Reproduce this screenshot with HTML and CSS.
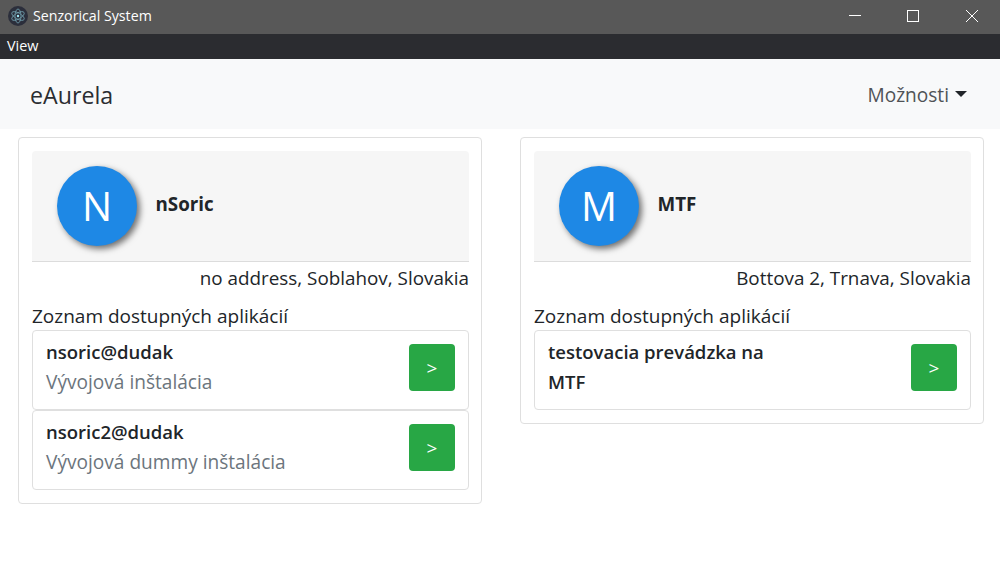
FILE: index.html
```html
<!DOCTYPE html>
<html lang="sk">
<head>
<meta charset="utf-8">
<title>Senzorical System</title>
<link rel="stylesheet" href="styles.css">
</head>
<body>
<div class="titlebar">
  <div class="title-left">
    <svg class="app-icon" viewBox="0 0 20 20" width="20" height="20">
      <circle cx="10" cy="10" r="10" fill="#2b2e3b"/>
      <g fill="none" stroke="#9feaf9" stroke-width=".8" opacity=".6">
        <ellipse cx="10" cy="10" rx="7" ry="3" transform="rotate(30 10 10)"/>
        <ellipse cx="10" cy="10" rx="7" ry="3" transform="rotate(90 10 10)"/>
        <ellipse cx="10" cy="10" rx="7" ry="3" transform="rotate(150 10 10)"/>
      </g>
      <circle cx="10" cy="10" r="1.2" fill="#9feaf9"/>
    </svg>
    <span class="app-title">Senzorical System</span>
  </div>
  <div class="win-controls">
    <div class="win-btn"><svg viewBox="0 0 12 12" width="12" height="12"><path d="M0 5.5H12" stroke="#fff" fill="none"/></svg></div>
    <div class="win-btn"><svg viewBox="0 0 12 12" width="12" height="12"><rect x=".5" y=".5" width="11" height="11" stroke="#fff" fill="none"/></svg></div>
    <div class="win-btn win-close"><svg viewBox="0 0 12 12" width="12" height="12"><path d="M0 0L12 12M12 0L0 12" stroke="#fff" fill="none"/></svg></div>
  </div>
</div>
<div class="menubar"><span class="menu-item">View</span></div>
<nav class="navbar">
  <span class="brand">eAurela</span>
  <span class="options">Možnosti<i class="caret"></i></span>
</nav>
<main class="columns">
  <section class="card">
    <div class="org-head">
      <div class="avatar">N</div>
      <div class="org-name">nSoric</div>
    </div>
    <div class="address">no address, Soblahov, Slovakia</div>
    <div class="list-title">Zoznam dostupných aplikácií</div>
    <div class="app-card">
      <div class="app-text">
        <div class="app-name">nsoric@dudak</div>
        <div class="app-sub">Vývojová inštalácia</div>
      </div>
      <button class="go">&gt;</button>
    </div>
    <div class="app-card">
      <div class="app-text">
        <div class="app-name">nsoric2@dudak</div>
        <div class="app-sub">Vývojová dummy inštalácia</div>
      </div>
      <button class="go">&gt;</button>
    </div>
  </section>
  <section class="card">
    <div class="org-head">
      <div class="avatar">M</div>
      <div class="org-name">MTF</div>
    </div>
    <div class="address">Bottova 2, Trnava, Slovakia</div>
    <div class="list-title">Zoznam dostupných aplikácií</div>
    <div class="app-card">
      <div class="app-text narrow">
        <div class="app-name">testovacia prevádzka na MTF</div>
      </div>
      <button class="go">&gt;</button>
    </div>
  </section>
</main>
</body>
</html>
```
FILE: styles.css
```css
* { box-sizing: border-box; }
html, body { margin: 0; padding: 0; }
body {
  width: 1000px;
  height: 583px;
  overflow: hidden;
  background: #fff;
  color: #212529;
  font-family: "Open Sans", "Noto Sans", "Liberation Sans", sans-serif;
  font-size: 19px;
}
.titlebar {
  height: 34px;
  padding-bottom: 2px;
  background: #585858;
  display: flex;
  justify-content: space-between;
  align-items: center;
  color: #fff;
}
.title-left { display: flex; align-items: center; padding-left: 8px; }
.app-icon { display: block; }
.app-title { margin: 0 0 1px 5px; font-size: 14.2px; }
.win-controls { display: flex; height: 100%; }
.win-btn { width: 58px; display: flex; align-items: center; justify-content: center; }
.win-close { padding-left: 2px; }
.win-btn svg { display: block; }
.menubar {
  height: 25px;
  background: #2b2c30;
  color: #fff;
  display: flex;
  align-items: center;
  padding: 0 0 2px 7px;
  font-size: 14.4px;
}
.navbar {
  height: 70px;
  padding: 2px 33px 0 30px;
  background: #f8f9fa;
  display: flex;
  justify-content: space-between;
  align-items: center;
}
.brand { font-size: 23.2px; color: #2a2d31; }
.options { color: #4f5256; font-size: 19.1px; display: flex; align-items: center; }
.caret {
  display: block;
  margin-left: 6px;
  margin-bottom: 3px;
  border-top: 6px solid #212529;
  border-left: 6px solid transparent;
  border-right: 6px solid transparent;
}
.columns {
  display: flex;
  align-items: flex-start;
  gap: 38px;
  padding: 8px 16px 0 18px;
}
.card {
  width: 464px;
  flex: none;
  border: 1px solid #dfdfdf;
  border-radius: 4px;
  padding: 13px 12px 13px 13px;
}
.org-head {
  height: 111px;
  background: #f6f6f6;
  border-bottom: 1px solid #dcdcdc;
  border-radius: 4px 4px 0 0;
  display: flex;
  align-items: center;
  padding-left: 25px;
}
.avatar {
  width: 80px;
  height: 80px;
  padding-bottom: 2px;
  border-radius: 50%;
  background: #1e88e5;
  color: #fff;
  font-size: 40px;
  display: flex;
  align-items: center;
  justify-content: center;
  box-shadow: 3px 3px 6px rgba(0, 0, 0, .55);
}
.org-name { margin: 0 0 5px 18.5px; font-weight: 700; font-size: 18.8px; }
.address { text-align: right; line-height: 26px; margin-top: 3px; font-size: 18.85px; }
.list-title { line-height: 26px; margin-top: 12px; margin-bottom: 1px; }
.app-card {
  height: 80px;
  border: 1px solid #dfdfdf;
  border-radius: 4px;
  display: flex;
  justify-content: space-between;
  align-items: flex-start;
  padding: 6px 13px 0;
}
.app-text { line-height: 30px; }
.narrow { width: 240px; }
.app-name { font-weight: 600; font-size: 18.5px; }
.app-sub { color: #6c757d; font-size: 19.1px; }
.go {
  width: 46px;
  height: 47px;
  margin-top: 7px;
  border: 0;
  border-radius: 4px;
  background: #28a745;
  color: #fff;
  font-family: inherit;
  font-size: 19px;
  padding: 0;
}
```
